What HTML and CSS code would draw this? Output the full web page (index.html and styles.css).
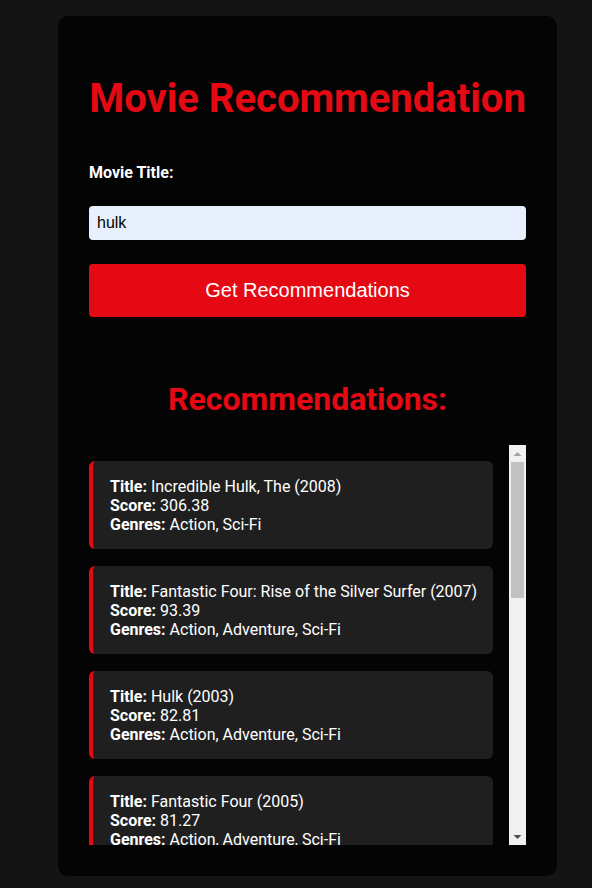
FILE: index.html
```html
<!DOCTYPE html>
<html>
<head>
<meta charset="utf-8">
<link rel="stylesheet" href="styles.css">
</head>
<body>
<div class="container">
  <h1 class="title">Movie Recommendation</h1>
  <form class="form">
    <label class="label" for="movie">Movie Title:</label>
    <input class="input" id="movie" type="text" value="hulk">
    <button class="button" type="button">Get Recommendations</button>
  </form>
  <h2 class="subtitle">Recommendations:</h2>
  <div class="results">
    <div class="list">
      <div class="card"><b>Title:</b> Incredible Hulk, The (2008)<br><b>Score:</b> 306.38<br><b>Genres:</b> Action, Sci-Fi</div>
      <div class="card"><b>Title:</b> Fantastic Four: Rise of the Silver Surfer (2007)<br><b>Score:</b> 93.39<br><b>Genres:</b> Action, Adventure, Sci-Fi</div>
      <div class="card"><b>Title:</b> Hulk (2003)<br><b>Score:</b> 82.81<br><b>Genres:</b> Action, Adventure, Sci-Fi</div>
      <div class="card"><b>Title:</b> Fantastic Four (2005)<br><b>Score:</b> 81.27<br><b>Genres:</b> Action, Adventure, Sci-Fi</div>
      <div class="card"><b>Title:</b> Iron Man (2008)<br><b>Score:</b> 78.54<br><b>Genres:</b> Action, Adventure, Sci-Fi</div>
      <div class="card"><b>Title:</b> Ghost Rider (2007)<br><b>Score:</b> 74.12<br><b>Genres:</b> Action, Fantasy, Thriller</div>
    </div>
    <div class="scrollbar" aria-hidden="true">
      <div class="sb-btn">
        <svg width="17" height="17" viewBox="0 0 17 17"><path d="M4.5 11 L8.5 7 L12.5 11 Z" fill="#a3a3a3"/></svg>
      </div>
      <div class="sb-track"><div class="sb-thumb"></div></div>
      <div class="sb-btn">
        <svg width="17" height="17" viewBox="0 0 17 17"><path d="M4.5 7 L8.5 11 L12.5 7 Z" fill="#505050"/></svg>
      </div>
    </div>
  </div>
</div>
</body>
</html>
```
FILE: styles.css
```css
html, body {
  margin: 0;
  padding: 0;
  background: #141414;
}
body {
  font-family: Roboto, "Noto Sans", sans-serif;
  color: #ffffff;
  padding: 16px 0 12px 58px;
}
.container {
  width: 437px;
  padding: 31px;
  background: #040404;
  border-radius: 10px;
}
.title {
  margin: 28px 0 41px;
  font-size: 40px;
  font-weight: 700;
  color: #e50914;
  text-align: center;
  white-space: nowrap;
}
.form {
  display: flex;
  flex-direction: column;
}
.label {
  font-weight: 700;
  font-size: 16px;
  line-height: 19px;
  margin-bottom: 24px;
}
.input {
  box-sizing: border-box;
  height: 34px;
  padding: 0 8px;
  border: none;
  border-radius: 4px;
  background: #e8f0fe;
  font-family: "Liberation Sans", Arial, sans-serif;
  font-size: 16px;
  color: #000;
  margin: 0 0 24px;
}
.button {
  height: 53px;
  border: none;
  border-radius: 4px;
  background: #e50914;
  color: #fff;
  font-family: "Liberation Sans", Arial, sans-serif;
  font-size: 20px;
}
.subtitle {
  margin: 64px 0 27px;
  font-size: 32px;
  line-height: 37px;
  font-weight: 700;
  color: #e50914;
  text-align: center;
}
.results {
  display: flex;
  height: 400px;
}
.list {
  flex: 1;
  min-width: 0;
  overflow: hidden;
  padding: 16px 16px 0 0;
}
.scrollbar {
  width: 17px;
  display: flex;
  flex-direction: column;
  background: #f1f1f1;
}
.sb-btn {
  height: 17px;
  flex: none;
}
.sb-btn svg {
  display: block;
}
.sb-track {
  flex: 1;
  padding: 0 2px;
}
.sb-thumb {
  height: 136px;
  background: #c1c1c1;
}
.card {
  background: #1f1f1f;
  border-left: 4px solid #e50914;
  border-radius: 6px;
  padding: 16px 8px 15px 17px;
  margin-bottom: 17px;
  font-size: 16px;
  line-height: 19px;
  white-space: nowrap;
}
```
